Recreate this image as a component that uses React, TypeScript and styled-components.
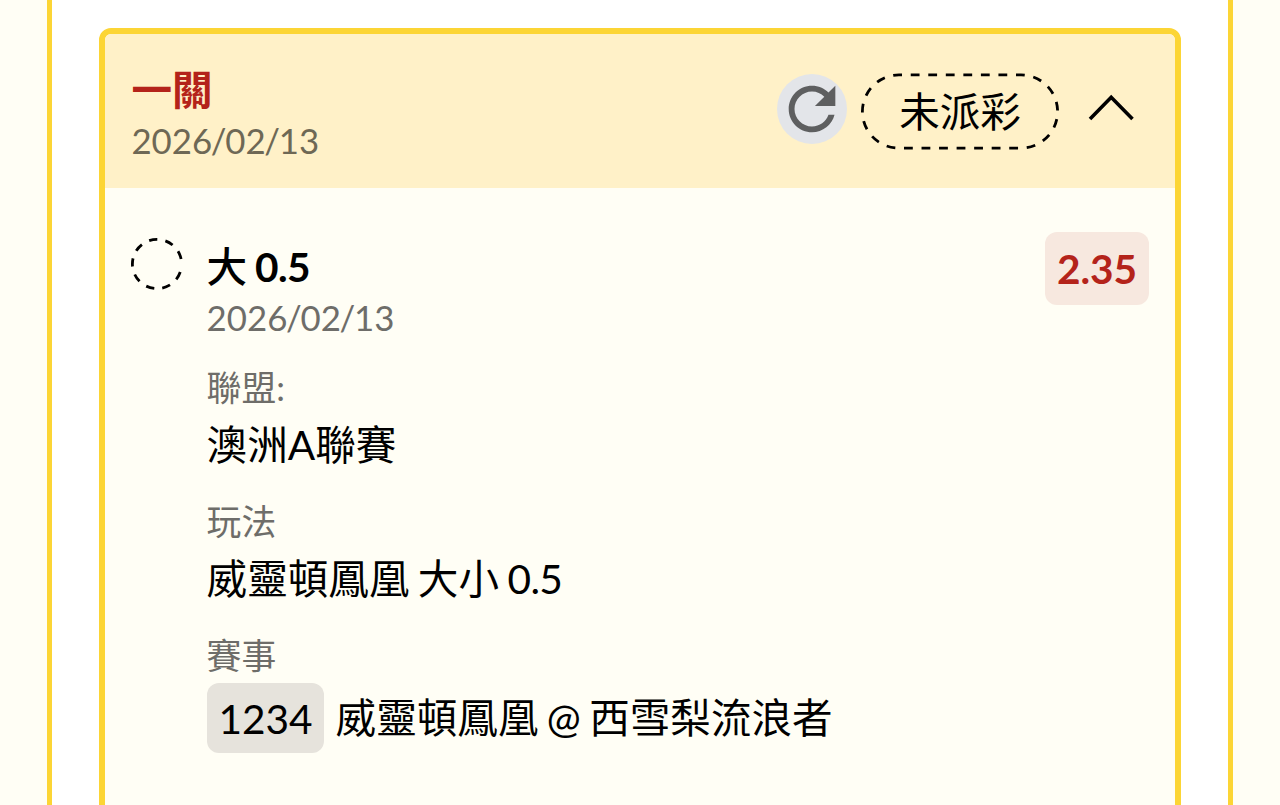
import React, { useState } from 'react';
import styled, { createGlobalStyle } from 'styled-components';

const bet = {
  title: '一關',
  date: ['2026', '02', '13'],
  status: '未派彩',
  pick: '大',
  line: ['0', '5'],
  odds: '2.35',
  league: '澳洲A聯賽',
  play: '威靈頓鳳凰 大小',
  code: '1234',
  match: '威靈頓鳳凰 @ 西雪梨流浪者',
};

const BetDate = ({ parts }: { parts: string[] }) => (
  <>
    {parts[0]}<Slash>/</Slash>{parts[1]}<Slash>/</Slash>{parts[2]}
  </>
);

const Line = ({ parts }: { parts: string[] }) => (
  <>
    {parts[0]}<Dot>.</Dot>{parts[1]}
  </>
);

const App = () => {
  const [open, setOpen] = useState(true);

  return (
    <Page>
      <GlobalStyle />
      <Panel>
        <Card>
          <CardHeader>
            <div>
              <Title>{bet.title}</Title>
              <HeaderDate><BetDate parts={bet.date} /></HeaderDate>
            </div>
            <Actions>
              <RefreshButton aria-label="refresh">
                <svg width="70" height="70" viewBox="0 0 24 24" fill="currentColor">
                  <path d="M17.65 6.35C16.2 4.9 14.21 4 12 4c-4.42 0-7.99 3.58-7.99 8s3.57 8 7.99 8c3.73 0 6.84-2.55 7.73-6h-2.08c-.82 2.33-3.04 4-5.65 4-3.31 0-6-2.69-6-6s2.69-6 6-6c1.66 0 3.14.69 4.22 1.78L13 11h7V4l-2.35 2.35z" />
                </svg>
              </RefreshButton>
              <Status>
                <StatusOutline viewBox="0 0 198 77">
                  <rect x="1.4" y="1.9" width="195.2" height="73.2" rx="36.6" pathLength="472.5" />
                </StatusOutline>
                {bet.status}
              </Status>
              <ToggleButton aria-label="toggle" onClick={() => setOpen(!open)}>
                <Chevron open={open} viewBox="0 0 50 30">
                  <path d="M4 26 25.2 4.3 46.5 26" />
                </Chevron>
              </ToggleButton>
            </Actions>
          </CardHeader>

          {open && (
            <CardBody>
              <PendingIcon viewBox="0 0 54 54">
                <circle cx="27" cy="27" r="24.6" />
              </PendingIcon>
              <Details>
                <Pick>
                  <PickSide>{bet.pick}</PickSide> <Line parts={bet.line} />
                </Pick>
                <PickDate><BetDate parts={bet.date} /></PickDate>
                <Label>聯盟:</Label>
                <Value>{bet.league}</Value>
                <Label>玩法</Label>
                <Value>{bet.play} <Line parts={bet.line} /></Value>
                <Label>賽事</Label>
                <MatchRow>
                  <Code>{bet.code}</Code>
                  <Match>{bet.match}</Match>
                </MatchRow>
              </Details>
              <Odds>{bet.odds}</Odds>
            </CardBody>
          )}
        </Card>
      </Panel>
    </Page>
  );
};

const GlobalStyle = createGlobalStyle`
  * {
    box-sizing: border-box;
  }

  body {
    margin: 0;
    overflow: hidden;
    background: #fffef5;
    color: #000;
    font-family: Lato, 'Noto Sans CJK TC', sans-serif;
    font-size: 40.6px;
    word-spacing: -2px;
  }
`;

const Page = styled.div`
  height: 805px;
  overflow: hidden;
  padding: 0 47px;
`;

const Panel = styled.div`
  height: 900px;
  padding: 28px 47px 0;
  background: #fff;
  border: solid #fcd535;
  border-width: 0 5px;
`;

const Card = styled.div`
  height: 860px;
  overflow: hidden;
  background: #fffef5;
  border: 6px solid #fcd535;
  border-radius: 12px;
`;

const CardHeader = styled.div`
  display: flex;
  justify-content: space-between;
  height: 154px;
  padding: 31px 39px 0 26.4px;
  background: #fff1c8;
`;

const Title = styled.div`
  height: 50px;
  line-height: 50px;
  color: #b4231a;
  font-weight: 700;
`;

const DateText = styled.div`
  height: 52px;
  line-height: 52px;
  font-size: 34.8px;
`;

const Slash = styled.span`
  margin: 0 -1.3px;
`;

const Dot = styled.span`
  margin: 0 -0.6px;
`;

const HeaderDate = styled(DateText)`
  color: #6e6855;
`;

const Actions = styled.div`
  display: flex;
  align-items: flex-start;
`;

const RefreshButton = styled.button`
  display: flex;
  width: 70px;
  height: 70px;
  margin: 8.5px 14px 0 0;
  padding: 0;
  border: none;
  border-radius: 50%;
  background: #e3e5e9;
  color: #5e5f60;
  cursor: pointer;
`;

const Status = styled.div`
  position: relative;
  display: flex;
  align-items: center;
  justify-content: center;
  width: 198px;
  height: 77px;
  margin-top: 8px;
  line-height: 76px;
`;

const StatusOutline = styled.svg`
  position: absolute;
  inset: 0;
  fill: none;
  stroke: #000;
  stroke-width: 2.8;
  stroke-dasharray: 8.8 8.7;
  stroke-dashoffset: 5.8;
`;

const ToggleButton = styled.button`
  margin: 27.8px 0 0 27px;
  padding: 0;
  border: none;
  background: none;
  cursor: pointer;
`;

const Chevron = styled.svg<{ open: boolean }>`
  display: block;
  width: 50px;
  height: 30px;
  fill: none;
  stroke: #000;
  stroke-width: 3.6;
  transform: ${props => props.open ? 'none' : 'rotate(180deg)'};
`;

const CardBody = styled.div`
  display: flex;
  align-items: flex-start;
  padding: 44px 26px 0 25px;
`;

const PendingIcon = styled.svg`
  width: 54px;
  height: 54px;
  margin: 5px 22.6px 0 0;
  fill: none;
  stroke: #000;
  stroke-width: 2.8;
  stroke-dasharray: 8.3 8.2;
  stroke-dashoffset: 8.3;
`;

const Details = styled.div`
  flex: 1;
`;

const Pick = styled.div`
  height: 60px;
  line-height: 70px;
  font-weight: 700;
`;

const PickSide = styled.span`
  font-weight: 500;
`;

const PickDate = styled(DateText)`
  color: #6e6d69;
`;

const Label = styled.div`
  height: 50px;
  margin-top: 19px;
  line-height: 50px;
  color: #6e6d69;
  font-size: 34.8px;
`;

const Value = styled.div`
  height: 65px;
  line-height: 64px;
`;

const MatchRow = styled.div`
  display: flex;
  gap: 12px;
  height: 70px;
  margin-top: 2px;
`;

const Code = styled.span`
  width: 117px;
  height: 70px;
  padding-left: 1px;
  border-radius: 12px;
  background: #e6e3dc;
  line-height: 72px;
  text-align: center;
`;

const Match = styled.span`
  line-height: 70px;
`;

const Odds = styled.div`
  width: 104px;
  height: 73px;
  border-radius: 12px;
  background: #f7e8df;
  color: #b4231a;
  font-weight: 700;
  line-height: 74px;
  text-align: center;
`;

export default App;
